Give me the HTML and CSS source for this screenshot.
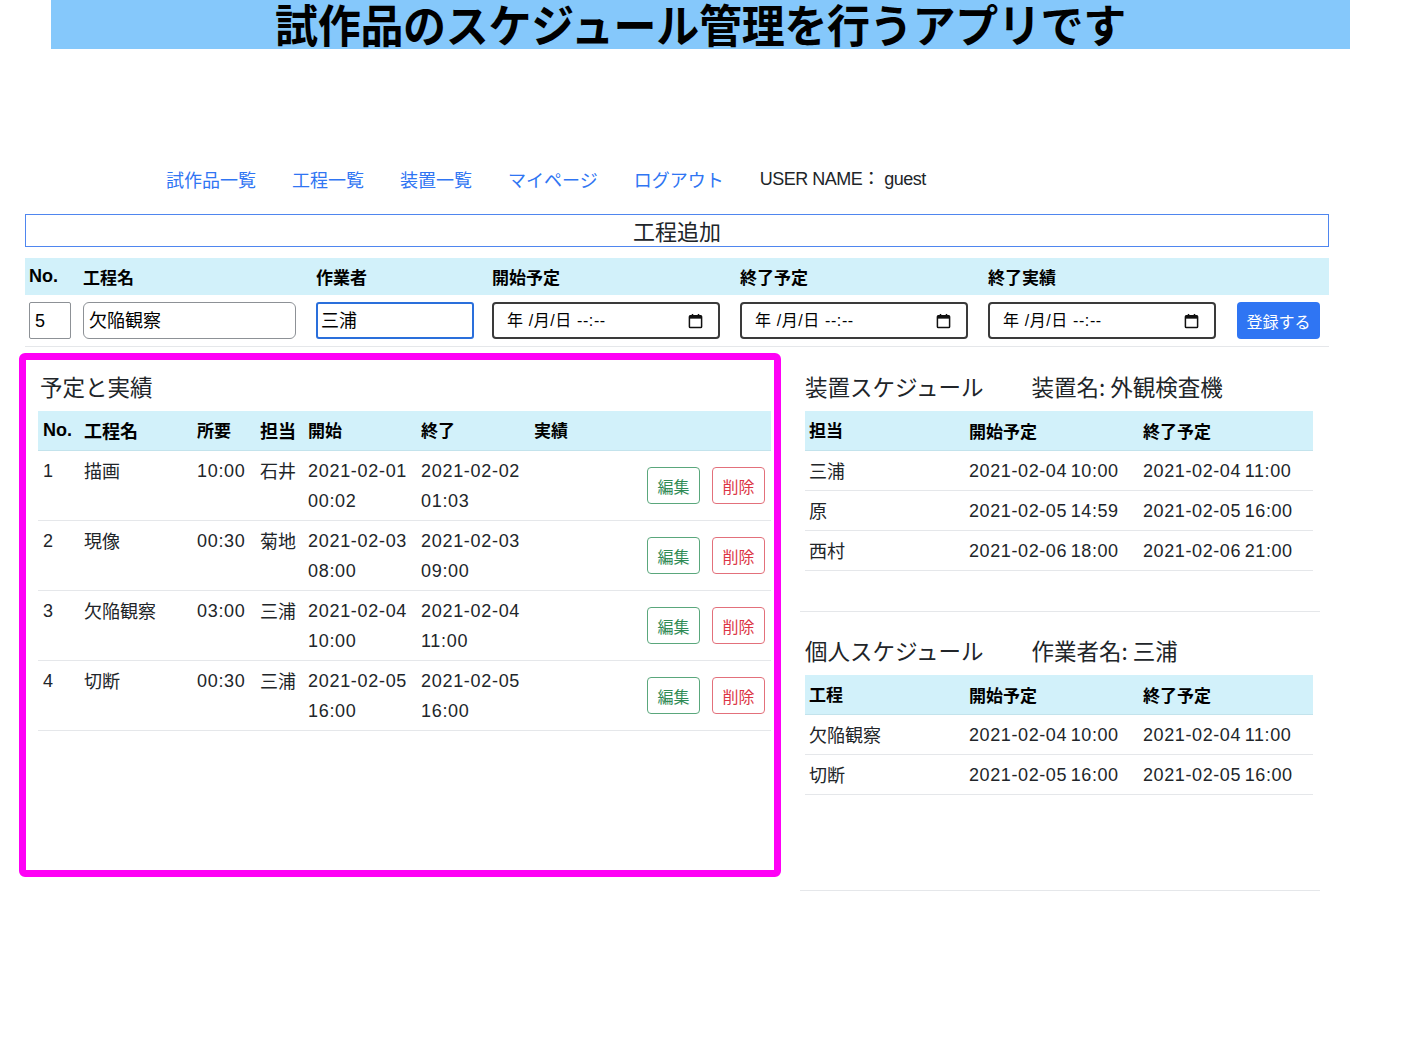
FILE: index.html
```html
<!DOCTYPE html>
<html lang="ja">
<head>
<meta charset="utf-8">
<title>試作品のスケジュール管理</title>
<link rel="stylesheet" href="styles.css">
</head>
<body>
<header class="title-bar"><h1 class="title">試作品のスケジュール管理を行うアプリです</h1></header>

<nav class="nav">
  <a href="#">試作品一覧</a>
  <a href="#">工程一覧</a>
  <a href="#">装置一覧</a>
  <a href="#">マイページ</a>
  <a href="#">ログアウト</a>
  <span class="user">USER NAME： guest</span>
</nav>

<div class="add-title">工程追加</div>

<div class="form-grid">
  <div class="fh">No.</div>
  <div class="fh">工程名</div>
  <div class="fh">作業者</div>
  <div class="fh">開始予定</div>
  <div class="fh">終了予定</div>
  <div class="fh">終了実績</div>
  <div class="fh"></div>

  <div class="fc"><div class="inp inp-no">5</div></div>
  <div class="fc"><div class="inp inp-name">欠陥観察</div></div>
  <div class="fc"><div class="inp inp-worker">三浦</div></div>
  <div class="fc"><div class="inp inp-date"><span>年 /月/日 --:--</span><svg class="cal" viewBox="0 0 16 16" width="15" height="16"><rect x="1.5" y="2.5" width="13" height="12.5" rx="1" fill="none" stroke="#111" stroke-width="1.6"/><rect x="1.5" y="2.5" width="13" height="3" fill="#111"/><rect x="4" y="0.5" width="1.6" height="3" fill="#111"/><rect x="10.4" y="0.5" width="1.6" height="3" fill="#111"/></svg></div></div>
  <div class="fc"><div class="inp inp-date"><span>年 /月/日 --:--</span><svg class="cal" viewBox="0 0 16 16" width="15" height="16"><rect x="1.5" y="2.5" width="13" height="12.5" rx="1" fill="none" stroke="#111" stroke-width="1.6"/><rect x="1.5" y="2.5" width="13" height="3" fill="#111"/><rect x="4" y="0.5" width="1.6" height="3" fill="#111"/><rect x="10.4" y="0.5" width="1.6" height="3" fill="#111"/></svg></div></div>
  <div class="fc"><div class="inp inp-date"><span>年 /月/日 --:--</span><svg class="cal" viewBox="0 0 16 16" width="15" height="16"><rect x="1.5" y="2.5" width="13" height="12.5" rx="1" fill="none" stroke="#111" stroke-width="1.6"/><rect x="1.5" y="2.5" width="13" height="3" fill="#111"/><rect x="4" y="0.5" width="1.6" height="3" fill="#111"/><rect x="10.4" y="0.5" width="1.6" height="3" fill="#111"/></svg></div></div>
  <div class="fc"><button class="btn-primary">登録する</button></div>
</div>

<main class="main">
  <section class="left-box">
    <h2 class="heading heading-left">予定と実績</h2>
    <div class="ltable">
      <div class="lrow lhead">
        <div>No.</div><div>工程名</div><div>所要</div><div>担当</div><div>開始</div><div>終了</div><div>実績</div><div></div>
      </div>
      <div class="lrow">
        <div>1</div><div>描画</div><div class="num">10:00</div><div>石井</div><div class="num">2021-02-01<br>00:02</div><div class="num">2021-02-02<br>01:03</div><div></div>
        <div class="acts"><button class="btn-edit">編集</button><button class="btn-del">削除</button></div>
      </div>
      <div class="lrow">
        <div>2</div><div>現像</div><div class="num">00:30</div><div>菊地</div><div class="num">2021-02-03<br>08:00</div><div class="num">2021-02-03<br>09:00</div><div></div>
        <div class="acts"><button class="btn-edit">編集</button><button class="btn-del">削除</button></div>
      </div>
      <div class="lrow">
        <div>3</div><div>欠陥観察</div><div class="num">03:00</div><div>三浦</div><div class="num">2021-02-04<br>10:00</div><div class="num">2021-02-04<br>11:00</div><div></div>
        <div class="acts"><button class="btn-edit">編集</button><button class="btn-del">削除</button></div>
      </div>
      <div class="lrow">
        <div>4</div><div>切断</div><div class="num">00:30</div><div>三浦</div><div class="num">2021-02-05<br>16:00</div><div class="num">2021-02-05<br>16:00</div><div></div>
        <div class="acts"><button class="btn-edit">編集</button><button class="btn-del">削除</button></div>
      </div>
    </div>
  </section>

  <section class="right-col">
    <div class="block block-device">
      <h2 class="heading heading-right">装置スケジュール<span class="sub">装置名: 外観検査機</span></h2>
      <div class="rtable">
        <div class="rrow rhead"><div>担当</div><div>開始予定</div><div>終了予定</div></div>
        <div class="rrow"><div>三浦</div><div class="num">2021-02-04 10:00</div><div class="num">2021-02-04 11:00</div></div>
        <div class="rrow"><div>原</div><div class="num">2021-02-05 14:59</div><div class="num">2021-02-05 16:00</div></div>
        <div class="rrow"><div>西村</div><div class="num">2021-02-06 18:00</div><div class="num">2021-02-06 21:00</div></div>
      </div>
    </div>
    <div class="block block-person">
      <h2 class="heading heading-right">個人スケジュール<span class="sub">作業者名: 三浦</span></h2>
      <div class="rtable">
        <div class="rrow rhead"><div>工程</div><div>開始予定</div><div>終了予定</div></div>
        <div class="rrow"><div>欠陥観察</div><div class="num">2021-02-04 10:00</div><div class="num">2021-02-04 11:00</div></div>
        <div class="rrow"><div>切断</div><div class="num">2021-02-05 16:00</div><div class="num">2021-02-05 16:00</div></div>
      </div>
    </div>
  </section>
</main>
</body>
</html>
```
FILE: styles.css
```css
* { box-sizing: border-box; }

body {
  margin: 0;
  font-family: "Liberation Sans", "Noto Sans CJK JP", sans-serif;
  font-size: 18px;
  color: #212529;
  background: #fff;
}

.title-bar {
  margin: 0 61px 0 51px;
  height: 49px;
  background: #85c8fb;
}

.title {
  margin: 0;
  font-family: "Noto Sans CJK JP", sans-serif;
  font-size: 43px;
  font-weight: 700;
  line-height: 44px;
  letter-spacing: -0.3px;
  text-align: center;
  color: #000;
  transform: scaleY(1.06);
  transform-origin: top center;
}

.nav {
  display: flex;
  gap: 36px;
  padding-left: 166px;
  margin-top: 117px;
  line-height: 27px;
  font-family: "Noto Sans CJK JP", sans-serif;
  font-size: 18px;
}

.nav a {
  color: #2f75f3;
  text-decoration: none;
}

.nav .user {
  font-family: "Liberation Sans", "Noto Sans CJK JP", sans-serif;
  color: #212529;
  letter-spacing: -0.5px;
}

.add-title {
  margin: 21px 82px 0 25px;
  height: 33px;
  border: 1px solid #4f86ef;
  text-align: center;
  font-family: "Noto Sans CJK JP", sans-serif;
  font-size: 22px;
  line-height: 30px;
}

.form-grid {
  margin: 11px 82px 0 25px;
  display: grid;
  grid-template-columns: 54px 233px 176px 248px 248px 249px 1fr;
}

.fh {
  background: #d2f1fa;
  height: 37px;
  padding: 0 4px;
  font-weight: bold;
  line-height: 37px;
  font-family: "Noto Sans CJK JP", sans-serif;
  font-size: 17px;
  color: #000;
}

.fh:first-child { font-family: "Liberation Sans", sans-serif; font-size: 18px; }

.fc {
  height: 52px;
  padding: 7px 4px 0 4px;
  border-bottom: 1px solid #e5e7ea;
}

.inp {
  height: 37px;
  border: 1px solid #8d9196;
  border-radius: 4px;
  padding: 0 5px;
  line-height: 36px;
  font-family: "Liberation Sans", "Noto Sans CJK JP", sans-serif;
  font-size: 18px;
  color: #000;
  background: #fff;
}

.inp-no { width: 42px; border-radius: 2px; }
.inp-name { width: 213px; border-radius: 6px; }
.inp-worker { width: 158px; border: 2px solid #2a6fdb; border-radius: 3px; padding-left: 3px; line-height: 34px; }

.inp-date {
  width: 228px;
  border: 2px solid #3a3a3a;
  border-radius: 4px;
  padding: 0 15px 0 13px;
  display: flex;
  align-items: center;
  justify-content: space-between;
  font-size: 16px;
  line-height: 33px;
  letter-spacing: 0.6px;
}

.cal { display: block; }

.btn-primary {
  display: block;
  width: 83px;
  height: 37px;
  border: none;
  border-radius: 4px;
  background: #2f75f3;
  color: #fff;
  font-family: "Noto Sans CJK JP", sans-serif;
  font-size: 16px;
  padding: 0;
}

.main {
  display: flex;
  align-items: flex-start;
  margin-top: 6px;
}

.left-box {
  margin-left: 19px;
  width: 762px;
  height: 524px;
  border: 7px solid #ff00f6;
  border-radius: 6px;
  padding: 10px 3px 0 12px;
}

.heading {
  margin: 0;
  font-family: "Noto Sans CJK JP", sans-serif;
  font-weight: normal;
  font-size: 22.5px;
  line-height: 33px;
  color: #212529;
}

.heading-left { padding-left: 2px; margin-bottom: 8px; }

.ltable { width: 733px; }

.lrow {
  display: grid;
  grid-template-columns: 41px 113px 63px 48px 113px 113px 60px 1fr;
  border-bottom: 1px solid #e5e7ea;
  line-height: 30px;
}

.lrow > div {
  padding: 5px 0 4px 5px;
  white-space: nowrap;
}

.lrow > div.num { letter-spacing: 0.7px; }

.lrow > div:nth-child(2),
.lrow > div:nth-child(4) { font-family: "Noto Sans CJK JP", sans-serif; font-size: 18px; padding-top: 4px; }

.lhead {
  background: #d2f1fa;
  border-bottom-color: #c3e3ec;
  font-weight: bold;
  color: #000;
}

.lhead > div { font-family: "Noto Sans CJK JP", sans-serif; font-size: 17px; padding-top: 4px; padding-bottom: 5px; }
.lhead > div:first-child { font-family: "Liberation Sans", sans-serif; font-size: 18px; }

.lrow > div.acts {
  display: flex;
  justify-content: flex-end;
  align-items: center;
  gap: 12px;
  padding: 0 6px 0 0;
}

.btn-edit, .btn-del {
  width: 53px;
  height: 37px;
  padding: 0;
  background: #fff;
  border-radius: 4px;
  font-family: "Noto Sans CJK JP", sans-serif;
  font-size: 16px;
}

.btn-edit { border: 1px solid #5aa77c; color: #2f8a55; }
.btn-del { border: 1px solid #e3707b; color: #dc3545; }

.right-col {
  margin-left: 19px;
  width: 520px;
}

.block {
  padding-top: 17px;
}

.block-device {
  height: 259px;
  border-bottom: 1px solid #e5e7ea;
}

.block-person {
  height: 279px;
  border-bottom: 1px solid #e5e7ea;
  padding-top: 22px;
}

.heading-right { padding-left: 5px; margin-bottom: 8px; }

.heading-right .sub { margin-left: 48px; }

.rtable { margin: 0 7px 0 5px; }

.rrow {
  display: grid;
  grid-template-columns: 160px 174px 1fr;
  border-bottom: 1px solid #e5e7ea;
  line-height: 30px;
}

.rrow > div {
  padding: 5px 4px 4px 4px;
  white-space: nowrap;
}

.rrow > div.num { letter-spacing: 0.6px; word-spacing: -2px; }

.rrow > div:first-child { font-family: "Noto Sans CJK JP", sans-serif; padding-top: 4px; padding-bottom: 5px; }

.rhead {
  background: #d2f1fa;
  border-bottom-color: #c3e3ec;
  font-weight: bold;
  color: #000;
}

.rhead > div { font-family: "Noto Sans CJK JP", sans-serif; font-size: 17px; }
```
